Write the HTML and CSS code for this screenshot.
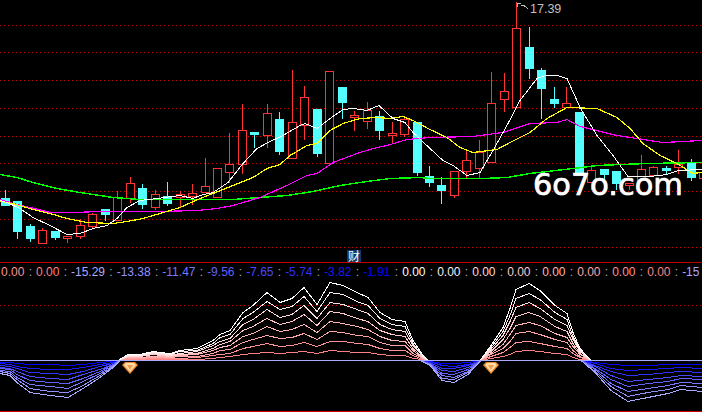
FILE: index.html
```html
<!DOCTYPE html>
<html lang="zh-CN">

<head>
    <meta charset="UTF-8" />
    <title>K线图</title>
    <link rel="stylesheet" href="styles.css">
</head>

<body>
    <main class="terminal">
        <div class="price-pane">
            <svg id="price-chart" class="chart" width="702" height="262" viewBox="0 0 702 262"></svg>
            <div class="watermark">6o7o.com</div>
            <div class="tag">财</div>
        </div>

        <div class="readout">
            <span class="r2">0.00</span><i>:</i>
            <span class="r1">0.00</span><i>:</i>
            <span class="b8">-15.29</span><i>:</i>
            <span class="b7">-13.38</span><i>:</i>
            <span class="b6">-11.47</span><i>:</i>
            <span class="b5">-9.56</span><i>:</i>
            <span class="b4">-7.65</span><i>:</i>
            <span class="b3">-5.74</span><i>:</i>
            <span class="b2">-3.82</span><i>:</i>
            <span class="b1">-1.91</span><i>:</i>
            <span class="r8">0.00</span><i>:</i>
            <span class="r7">0.00</span><i>:</i>
            <span class="r6">0.00</span><i>:</i>
            <span class="r5">0.00</span><i>:</i>
            <span class="r4">0.00</span><i>:</i>
            <span class="r3">0.00</span><i>:</i>
            <span class="r2">0.00</span><i>:</i>
            <span class="r1">0.00</span><i>:</i>
            <span class="b8">-15</span>
        </div>

        <svg id="flow-chart" class="chart" width="702" height="129" viewBox="0 282 702 129"></svg>
    </main>

    <script src="chart.js"></script>
</body>

</html>
```

FILE: styles.css
```css
* {
    margin: 0;
    padding: 0;
    box-sizing: border-box;
}

body {
    background-color: #000;
    overflow: hidden;
}

.terminal {
    width: 702px;
    height: 412px;
    overflow: hidden;
    border-bottom: 1px solid #d00000;
    font-family: "Liberation Sans", Arial, sans-serif;
}

.chart {
    display: block;
    overflow: visible;
    shape-rendering: crispEdges;
}

.price-pane {
    position: relative;
    height: 263px;
    border-bottom: 1px solid #c00000;
}

.watermark {
    position: absolute;
    left: 533px;
    top: 167px;
    color: #fff;
    font-family: "DejaVu Sans", sans-serif;
    font-size: 30.4px;
    line-height: 36px;
    -webkit-text-stroke: 0.5px #fff;
    text-shadow: 0 0 1px #bbb;
    white-space: nowrap;
}

.tag {
    position: absolute;
    left: 347px;
    top: 250px;
    width: 14px;
    height: 12px;
    background-color: #0f3a6b;
    color: #fff;
    font-family: "Noto Sans CJK SC", sans-serif;
    font-size: 12px;
    line-height: 12px;
    text-align: center;
}

.readout {
    display: flex;
    height: 19px;
    padding: 0 0 0 1px;
    font-size: 12px;
    line-height: 19px;
    white-space: nowrap;
    overflow: hidden;
}

.readout i {
    font-style: normal;
    margin: 0 4px 0 4.3px;
    color: #aaaaaa;
}

.peak-label {
    fill: #c0c0c0;
    font-family: "Liberation Sans", Arial, sans-serif;
    font-size: 12.5px;
    shape-rendering: auto;
}

.r1 { color: #ff8080; }
.r2 { color: #ff9292; }
.r3 { color: #ffa4a4; }
.r4 { color: #ffb6b6; }
.r5 { color: #ffc8c8; }
.r6 { color: #ffdbdb; }
.r7 { color: #ffeded; }
.r8 { color: #ffffff; }

.b1 { color: #0000ff; }
.b2 { color: #1818ff; }
.b3 { color: #3030ff; }
.b4 { color: #4949ff; }
.b5 { color: #6161ff; }
.b6 { color: #7979ff; }
.b7 { color: #9292ff; }
.b8 { color: #aaaaff; }
```

FILE: chart.js
```js
const SVG_NS = "http://www.w3.org/2000/svg";

const priceChart = document.querySelector("#price-chart");
const flowChart = document.querySelector("#flow-chart");

const RED = "#ff3434";
const CYAN = "#54ffff";
const GRID = "#cc0000";

const gridRows = [25, 52, 80, 108, 136, 163, 191, 219, 247];

// bodyTop, bodyBottom, wickTop, wickBottom, up
const candles = [
    [198, 205, 190, 205, 0], [201, 231, 201, 238, 0], [226, 238, 224, 241, 0], [230, 243, 228, 243, 1],
    [231, 237, 231, 239, 0], [236, 238, 236, 242, 1], [225, 236, 219, 238, 1], [214, 226, 213, 228, 1],
    [209, 214, 209, 220, 0], [197, 220, 191, 220, 1], [183, 198, 177, 202, 1], [188, 204, 184, 208, 0],
    [194, 207, 190, 209, 1], [196, 203, 182, 205, 0], [194, 197, 191, 206, 1], [193, 196, 184, 204, 1],
    [186, 192, 158, 192, 1], [168, 197, 168, 197, 1], [164, 172, 133, 182, 1], [130, 164, 104, 173, 1],
    [132, 134, 132, 147, 0], [113, 135, 104, 147, 1], [119, 151, 112, 154, 0], [122, 158, 70, 158, 1],
    [97, 125, 86, 139, 1], [109, 153, 109, 156, 0], [71, 163, 71, 163, 1], [87, 102, 87, 118, 0],
    [115, 117, 111, 130, 1], [110, 121, 102, 128, 1], [116, 130, 111, 139, 0], [133, 135, 122, 142, 1],
    [119, 134, 116, 136, 1], [122, 172, 122, 175, 0], [176, 182, 166, 186, 0], [185, 190, 177, 203, 0],
    [171, 195, 171, 197, 1], [160, 171, 150, 177, 1], [152, 168, 140, 178, 1], [103, 162, 72, 162, 1],
    [91, 99, 73, 111, 1], [28, 107, 2, 107, 1], [47, 68, 27, 78, 0], [70, 88, 68, 118, 0],
    [99, 103, 87, 107, 0], [103, 107, 87, 107, 1], [112, 175, 112, 175, 0], [170, 182, 166, 189, 1],
    [169, 174, 169, 186, 0], [171, 183, 171, 189, 0], [183, 185, 183, 189, 1], [169, 180, 155, 180, 1],
    [167, 175, 166, 175, 1], [168, 170, 166, 174, 0], [164, 167, 150, 173, 1], [163, 177, 159, 180, 0],
    [172, 178, 168, 178, 1],
];

const averages = [
    {
        color: "#00ff00",
        width: 1.4,
        points: [[0, 174], [17, 177], [33, 182], [57, 188], [80, 192], [113, 197], [140, 199], [233, 199], [260, 197],
            [287, 195], [313, 191], [340, 185], [367, 181], [390, 178], [420, 177], [430, 178], [483, 178], [507, 177],
            [530, 173], [573, 168], [597, 165], [647, 163], [702, 162]],
    },
    {
        color: "#ff00ff",
        width: 1.2,
        points: [[0, 199], [13, 203], [30, 207], [50, 212], [73, 212], [100, 211], [160, 211], [197, 210], [217, 208],
            [233, 205], [260, 197], [287, 185], [307, 175], [317, 173], [333, 162], [357, 153], [373, 148], [387, 145],
            [407, 139], [430, 137], [473, 136], [503, 132], [530, 123], [557, 122], [567, 119], [580, 126], [617, 135],
            [663, 142], [702, 140]],
    },
    {
        color: "#ffff00",
        width: 1.2,
        points: [[0, 201], [13, 203], [33, 209], [50, 213], [67, 218], [87, 222], [113, 223], [127, 221], [143, 218],
            [160, 213], [180, 207], [200, 198], [213, 193], [233, 185], [253, 177], [267, 168], [280, 164], [290, 155],
            [307, 145], [317, 143], [330, 130], [343, 123], [360, 118], [377, 117], [390, 118], [403, 116], [413, 120],
            [430, 129], [447, 137], [460, 147], [473, 152], [497, 149], [510, 142], [530, 132], [547, 118], [567, 107],
            [597, 108], [617, 117], [630, 128], [643, 143], [660, 155], [677, 163], [693, 173], [702, 172]],
    },
    {
        color: "#ffffff",
        width: 1,
        points: [[0, 200], [7, 202], [20, 208], [33, 217], [50, 225], [67, 234], [80, 233], [93, 228], [107, 225],
            [117, 218], [127, 207], [140, 200], [157, 198], [180, 195], [193, 198], [200, 195], [213, 192], [228, 182],
            [243, 163], [257, 148], [268, 142], [283, 135], [300, 125], [305, 123], [317, 128], [330, 118], [343, 109],
            [353, 108], [367, 110], [379, 105], [393, 118], [405, 122], [413, 132], [430, 148], [443, 160], [453, 165],
            [467, 175], [480, 172], [493, 150], [508, 123], [520, 100], [537, 78], [545, 75], [557, 75], [567, 78],
            [580, 107], [597, 135], [613, 155], [628, 176], [650, 176], [667, 174], [678, 170], [702, 169]],
    },
];

// outermost line of the fan below and above the axis
const AXIS = 360;
const blueEdge = [[0, 373], [10, 375], [17, 382], [30, 392], [50, 395], [68, 397], [83, 388], [100, 377], [113, 367],
    [120, 360], [420, 360], [430, 365], [442, 380], [454, 382], [468, 374], [481, 360], [581, 360], [595, 372],
    [611, 390], [628, 401], [648, 397], [668, 393], [681, 389], [702, 391]];
const redEdge = [[118, 360], [128, 354], [140, 354], [153, 351], [160, 352], [170, 353], [180, 350], [197, 348],
    [213, 340], [220, 334], [230, 330], [243, 312], [253, 305], [267, 292], [280, 302], [292, 298], [304, 287],
    [317, 304], [330, 282], [343, 285], [357, 292], [368, 297], [380, 312], [392, 319], [405, 321], [413, 340],
    [423, 355], [428, 360], [480, 360], [491, 345], [503, 327], [510, 308], [516, 289], [529, 283], [540, 290],
    [555, 305], [567, 313], [573, 332], [580, 348], [591, 360]];

const add = (parent, tag, attrs) => {
    const el = document.createElementNS(SVG_NS, tag);
    for (let key in attrs) {
        el.setAttribute(key, attrs[key]);
    }
    parent.appendChild(el);
    return el;
};

const dottedLine = (parent, y) => {
    add(parent, "line", { x1: 0, x2: 702, y1: y + 0.5, y2: y + 0.5, stroke: GRID, "stroke-dasharray": "1 3" });
};

const drawCandle = (candle, index) => {
    const [top, bottom, wickTop, wickBottom, up] = candle;
    const x = Math.round(5 + 12.47 * index);
    const color = up ? RED : CYAN;
    add(priceChart, "line", { x1: x + 0.5, x2: x + 0.5, y1: wickTop, y2: wickBottom + 1, stroke: color });
    add(priceChart, "rect", {
        x: x - 3.5,
        y: top + 0.5,
        width: 8,
        height: bottom - top,
        fill: up ? "#000" : color,
        stroke: color,
    });
};

const mix = (from, to, t) => {
    const parts = from.map((value, i) => Math.round(value + (to[i] - value) * t));
    return `rgb(${parts.join(",")})`;
};

const drawFan = (edge, from, to) => {
    for (let level = 1; level <= 8; level++) {
        const points = edge.map(([x, y]) => {
            const scaled = AXIS + ((y - AXIS) * level) / 8;
            return `${x},${Math.round(scaled) + 0.5}`;
        });
        add(flowChart, "polyline", {
            points: points.join(" "),
            fill: "none",
            stroke: mix(from, to, (level - 1) / 7),
        });
    }
};

const drawDiamond = (x) => {
    const g = add(flowChart, "g", { transform: `translate(${x} 362)`, style: "shape-rendering:auto" });
    add(g, "polygon", { points: "0,3 3,0 13,0 16,3 8,12", fill: "#e88a2c" });
    add(g, "polygon", { points: "2,3 4,1 12,1 14,3 8,10", fill: "#ffdca8" });
    add(g, "polygon", { points: "5,3 11,3 8,8", fill: "#f0a050" });
};

// price pane
gridRows.forEach((y) => dottedLine(priceChart, y));
candles.forEach(drawCandle);
averages.forEach((line) => {
    add(priceChart, "polyline", {
        points: line.points.map(([x, y]) => `${x},${y + 0.5}`).join(" "),
        fill: "none",
        stroke: line.color,
        "stroke-width": line.width,
    });
});

// highest price marker
add(priceChart, "polyline", { points: "517.5,7 517.5,3.5 520.5,3.5", fill: "none", stroke: "#c0c0c0" });
add(priceChart, "polyline", { points: "521,5.5 524,5.5 528,8.5", fill: "none", stroke: "#c0c0c0" });
const peak = add(priceChart, "text", { x: 530, y: 13, class: "peak-label" });
peak.textContent = "17.39";

// lower pane
dottedLine(flowChart, 305);
drawFan(blueEdge, [0, 0, 255], [170, 170, 255]);
drawFan(redEdge, [255, 128, 128], [255, 255, 255]);
add(flowChart, "line", { x1: 0, x2: 702, y1: AXIS + 0.5, y2: AXIS + 0.5, stroke: "#aaaaff" });
drawDiamond(122);
drawDiamond(483);
```
